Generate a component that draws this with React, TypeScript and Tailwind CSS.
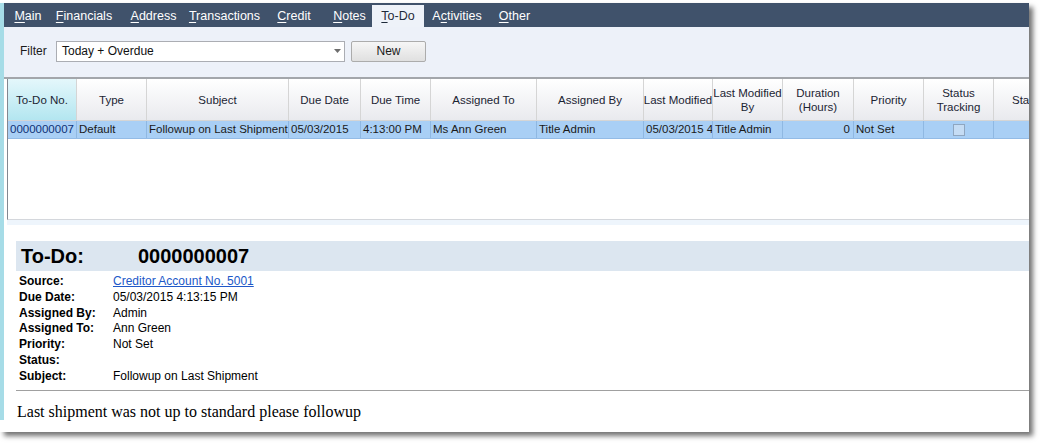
const TABS = [
  { pre: '', key: 'M', rest: 'ain', w: 'w-[42px]' },
  { pre: '', key: 'F', rest: 'inancials', w: 'w-[70px]' },
  { pre: '', key: 'A', rest: 'ddress', w: 'w-[69px]' },
  { pre: '', key: 'T', rest: 'ransactions', w: 'w-[73px]' },
  { pre: '', key: 'C', rest: 'redit', w: 'w-[66px]' },
  { pre: '', key: 'N', rest: 'otes', w: 'w-[45px]' },
  { pre: '', key: 'T', rest: 'o-Do', w: 'w-[52px]', active: true },
  { pre: 'A', key: 'c', rest: 'tivities', w: 'w-[66px]' },
  { pre: '', key: 'O', rest: 'ther', w: 'w-[49px]' },
];

const COLS = [
  { label: ['To-Do No.'], w: 'w-[69px]', value: '0000000007', first: true },
  { label: ['Type'], w: 'w-[70px]', value: 'Default' },
  { label: ['Subject'], w: 'w-[142px]', value: 'Followup on Last Shipment' },
  { label: ['Due Date'], w: 'w-[72px]', value: '05/03/2015' },
  { label: ['Due Time'], w: 'w-[70px]', value: '4:13:00 PM' },
  { label: ['Assigned To'], w: 'w-[106px]', value: 'Ms Ann Green' },
  { label: ['Assigned By'], w: 'w-[107px]', value: 'Title Admin' },
  { label: ['Last Modified'], w: 'w-[69px]', value: '05/03/2015 4' },
  { label: ['Last Modified', 'By'], w: 'w-[70px]', value: 'Title Admin' },
  { label: ['Duration', '(Hours)'], w: 'w-[71px]', value: '0', right: true },
  { label: ['Priority'], w: 'w-[70px]', value: 'Not Set' },
  { label: ['Status', 'Tracking'], w: 'w-[70px]', value: '', check: true },
  { label: ['Sta'], w: 'w-[40px]', value: '' },
];

const DETAILS = [
  { label: 'Source:', value: 'Creditor Account No. 5001', link: true },
  { label: 'Due Date:', value: '05/03/2015 4:13:15 PM' },
  { label: 'Assigned By:', value: 'Admin' },
  { label: 'Assigned To:', value: 'Ann Green' },
  { label: 'Priority:', value: 'Not Set' },
  { label: 'Status:', value: '' },
  { label: 'Subject:', value: 'Followup on Last Shipment' },
];

export default function App() {
  return (
    <div className="w-[1043px] h-[446px] bg-white pt-[3px] overflow-hidden font-['Liberation_Sans',Arial,sans-serif]">
      <div className="flex w-[1029px] h-[429px] bg-white shadow-[4px_4px_5px_rgba(0,0,0,0.55)]">
        <div className="w-[4px] h-[417px] bg-[#a6dce7]" />
        <div className="flex-1 flex flex-col min-w-0">
          {/* tab strip */}
          <div className="h-[24px] bg-[#40526b] flex items-end pl-[3px]">
            {TABS.map((t, i) => (
              <div
                key={i}
                className={`${t.w} h-[22px] flex items-center justify-center text-[12.5px] ${t.active ? 'bg-[#eef2f9] text-[#1e2a3a]' : 'text-white'}`}
              >
                <span>
                  {t.pre}
                  <span className="underline underline-offset-2">{t.key}</span>
                  {t.rest}
                </span>
              </div>
            ))}
          </div>

          {/* filter bar */}
          <div className="h-[52px] bg-[#edf1f9] flex items-center pl-[16px] pb-[2px] border-b-2 border-[#a3a6ab]">
            <span className="text-[12px] text-[#1a1a1a] w-[36px]">Filter</span>
            <div className="w-[289px] h-[21px] bg-white border border-[#abadb3] flex items-center justify-between pl-[5px] pr-[3px] text-[12px] text-[#111]">
              <span>Today + Overdue</span>
              <svg width="7" height="4" viewBox="0 0 7 4"><path d="M0 0h7L3.5 4z" fill="#6d6d6d" /></svg>
            </div>
            <button className="ml-[6px] w-[75px] h-[21px] rounded-[2px] border border-[#acacac] bg-gradient-to-b from-[#f6f6f6] to-[#e0e0e0] text-[12px] text-[#1a1a1a]">
              New
            </button>
          </div>

          {/* grid */}
          <div className="h-[141px] ml-[3px] border-l border-[#828790] border-b border-b-[#d4d7dc] bg-white overflow-hidden">
            <div className="flex h-[42px] border-b border-[#d5d5d5]">
              {COLS.map((c, i) => (
                <div
                  key={i}
                  className={`${c.w} shrink-0 flex flex-col items-center justify-center text-center whitespace-nowrap text-[11.5px] leading-[14px] text-[#1b2433] border-r border-[#d5d5d5] overflow-hidden ${c.first ? 'bg-gradient-to-b from-[#e4f7fb] to-[#b3e6f0]' : 'bg-gradient-to-b from-white to-[#e9eaee]'} ${c.label[0] === 'Sta' ? 'items-start pl-[18px]' : ''}`}
                >
                  {c.label.map((l, j) => (
                    <span key={j}>{l}</span>
                  ))}
                </div>
              ))}
            </div>
            <div className="flex h-[18px] bg-[#a9cff5] border-b border-[#93bbe6]">
              {COLS.map((c, i) => (
                <div
                  key={i}
                  className={`${c.w} shrink-0 flex items-center overflow-hidden whitespace-nowrap text-[11.5px] border-r border-[#8fb8e2] px-[2px] ${c.first ? 'text-[#0f3175]' : 'text-[#1a1a1a]'} ${c.right ? 'justify-end pr-[3px]' : ''} ${c.check ? 'justify-center' : ''}`}
                >
                  {c.check ? <span className="w-[12px] h-[12px] border border-[#8fa6c0] bg-[#c5dcf4]" /> : c.value}
                </div>
              ))}
            </div>
          </div>
          <div className="h-[5px] ml-[3px] bg-[#eef5fc]" />

          {/* detail */}
          <div className="flex-1 pl-[12px] pt-[16px]">
            <div className="h-[30px] bg-[#dce6f0] flex items-center pl-[5px] text-[20px] font-bold text-black">
              <span className="w-[117px]">To-Do:</span>
              <span>0000000007</span>
            </div>
            <div className="pt-[2px] pl-[3px] pb-[6px]">
              {DETAILS.map((d, i) => (
                <div key={i} className="flex h-[15.8px] items-center text-[12px] text-black">
                  <span className="w-[94px] font-bold">{d.label}</span>
                  {d.link ? (
                    <span className="text-[#2058c8] underline">{d.value}</span>
                  ) : (
                    <span>{d.value}</span>
                  )}
                </div>
              ))}
            </div>
            <div className="border-t border-[#a0a0a0]" />
            <div className="pt-[9px] pl-[1px] text-[16px] text-black font-['Liberation_Serif','Times_New_Roman',serif]">
              Last shipment was not up to standard please followup
            </div>
          </div>
        </div>
      </div>
    </div>
  );
}
